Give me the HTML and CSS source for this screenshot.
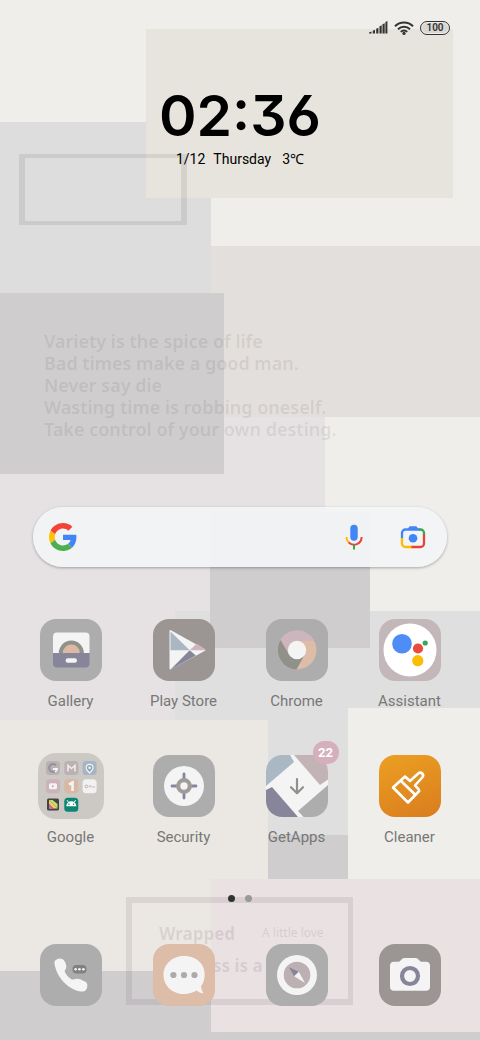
FILE: index.html
```html
<!DOCTYPE html>
<html lang="en">
<head>
    <meta charset="UTF-8">
    <meta name="viewport" content="width=device-width, initial-scale=1.0">
    <title>Home Screen</title>
    <link rel="stylesheet" href="styles.css">
</head>
<body>
    <!-- Wallpaper -->
    <svg class="wallpaper" viewBox="0 0 480 1040" preserveAspectRatio="xMidYMid slice" aria-hidden="true">
        <rect width="480" height="1040" fill="#efeeea"/>
        <rect y="122" width="211" height="171" fill="#dddddd"/>
        <rect x="146" y="29" width="307" height="169" fill="#e6e4dd"/>
        <path d="M19 154h168v71H19zM25 158v63h156v-63z" fill="#000" fill-opacity=".08" fill-rule="evenodd"/>
        <rect x="211" y="246" width="269" height="171" fill="#e3dfdc"/>
        <rect y="417" width="325" height="303" fill="#e6e2e3"/>
        <rect y="293" width="224" height="181" fill="#cfcdce"/>
        <rect x="175" y="611" width="305" height="109" fill="#dfdfdf"/>
        <rect x="210" y="512" width="160" height="136" fill="#cfcdce"/>
        <rect y="720" width="268" height="252" fill="#ebe8e3"/>
        <rect x="268" y="708" width="80" height="127" fill="#dfdfdf"/>
        <rect x="348" y="708" width="132" height="171" fill="#efeeea"/>
        <rect x="268" y="835" width="80" height="44" fill="#cfcdce"/>
        <rect y="971" width="480" height="69" fill="#cfcdce"/>
        <rect x="211" y="879" width="269" height="153" fill="#eae1e2"/>
        <path d="M126 897h227v108H126zM132 903v96h216v-96z" fill="#503c50" fill-opacity=".11" fill-rule="evenodd"/>
        <text class="wall-title" x="159" y="940">Wrapped</text>
        <text class="wall-small" x="262" y="937">A little love</text>
        <text class="wall-title" x="213" y="972">ss is a</text>
    </svg>

    <header class="status-bar">
        <svg width="19" height="13" viewBox="0 0 19 13" role="img" aria-label="Signal">
            <path d="M0 12.5h2.500V10.600L0 11.600zM3.800 12.500h2.200V8.800l-2.200 1zM7.200 12.500h2.200V6.700l-2.200 1zM10.500 12.500h2.200V4.300l-2.200 1zM13.500 12.500h2.200V2.200l-2.200 1zM16.400 12.500h2V0l-2 1z" fill="#333"/>
        </svg>
        <svg width="20" height="14" viewBox="0 0 20 14" role="img" aria-label="Wi-Fi">
            <g fill="none" stroke="#333" stroke-width="2">
                <path d="M1 5.300a12.800 12.800 0 0 1 18 0"/>
                <path d="M4 8.200a8.600 8.600 0 0 1 12 0"/>
                <path d="M6.800 10.900a4.600 4.600 0 0 1 6.400 0"/>
            </g>
            <circle cx="10" cy="12.400" r="1.600" fill="#333"/>
        </svg>
        <span class="battery">100</span>
    </header>

    <main>
        <section class="clock">
            <h1 class="time">02:36</h1>
            <p class="date"><span>1/12</span><span>Thursday</span><span class="temp">3℃</span></p>
        </section>

        <blockquote class="quote">
            Variety is the spice of life<br>
            Bad times make a good man.<br>
            Never say die<br>
            Wasting time is robbing oneself.<br>
            Take control of your own desting.
        </blockquote>

        <form class="search">
            <svg width="28" height="28" viewBox="0 0 48 48" aria-hidden="true">
                <path fill="#f44336" d="M24 9.500c3.540 0 6.710 1.220 9.210 3.600l6.850-6.850C35.900 2.380 30.470 0 24 0 14.620 0 6.510 5.380 2.560 13.220l7.980 6.190C12.430 13.720 17.740 9.500 24 9.500z"/>
                <path fill="#4285f4" d="M46.980 24.550c0-1.570-.15-3.090-.38-4.550H24v9.020h12.940c-.58 2.960-2.260 5.480-4.780 7.180l7.730 6c4.510-4.180 7.090-10.360 7.090-17.650z"/>
                <path fill="#ffc107" d="M10.530 28.590A14.500 14.500 0 0 1 9.770 24c0-1.600.27-3.140.76-4.590l-7.980-6.190A23.900 23.900 0 0 0 0 24c0 3.880.92 7.540 2.560 10.780z"/>
                <path fill="#4caf50" d="M24 48c6.480 0 11.930-2.130 15.890-5.810l-7.730-6c-2.150 1.450-4.920 2.300-8.160 2.300-6.260 0-11.570-4.220-13.470-9.910l-7.980 6.190C6.510 42.620 14.620 48 24 48z"/>
            </svg>
            <input type="text" aria-label="Search">
            <button type="button" aria-label="Voice search">
                <svg width="18" height="26" viewBox="0 0 18 26">
                    <rect x="5.300" y="0.700" width="7.400" height="16" rx="3.700" fill="#4285f4"/>
                    <path d="M1.400 13a7.600 7.600 0 0 0 2.400 5.600" fill="none" stroke="#fbbc04" stroke-width="2"/>
                    <path d="M3.600 18.400A7.600 7.600 0 0 0 16.600 13" fill="none" stroke="#ea4335" stroke-width="2"/>
                    <path d="M9 20.800v4.600" stroke="#34a853" stroke-width="2"/>
                </svg>
            </button>
            <button type="button" aria-label="Search with camera">
                <svg width="26" height="24" viewBox="0 0 26 24">
                    <g fill="none" stroke-width="2.300">
                        <path d="M2 13.500V8a3.500 3.500 0 0 1 3.500-3.500H20" stroke="#4285f4"/>
                        <path d="M19 4.500h1.500A3.500 3.500 0 0 1 24 8v2" stroke="#34a853"/>
                        <path d="M24 9.500v9a3.500 3.500 0 0 1-3.500 3.500H11" stroke="#ea4335"/>
                        <path d="M11.500 22h-6A3.500 3.500 0 0 1 2 18.500V13" stroke="#fbbc04"/>
                    </g>
                    <path d="M7.500 4.500l1.300-2.300q.5-.9 1.600-.9h5.200q1.100 0 1.600.9l1.300 2.300z" fill="#4285f4"/>
                    <circle cx="13" cy="13.300" r="4.300" fill="#4285f4"/>
                </svg>
            </button>
        </form>

        <nav class="apps" aria-label="Apps">
            <a class="app" href="#">
                <span class="icon gray">
                    <svg viewBox="0 0 62 62">
                        <path d="M13 34V17.500a4 4 0 0 1 4-4h28.500a4 4 0 0 1 4 4V34z" fill="#f4f4f4"/>
                        <path d="M18.800 34a12.500 12.500 0 0 1 25 0z" fill="#90918a"/>
                        <path d="M22.800 34a8.500 8.500 0 0 1 17 0z" fill="#ddb9a4"/>
                        <path d="M13 34h36.500v10.500a4 4 0 0 1-4 4H17a4 4 0 0 1-4-4z" fill="#87859a"/>
                        <rect x="25.600" y="39.300" width="11.400" height="4.400" rx="2.200" fill="#f4f4f4"/>
                    </svg>
                </span>
                <span class="label">Gallery</span>
            </a>
            <a class="app" href="#">
                <span class="icon taupe">
                    <svg viewBox="0 0 62 62">
                        <path d="M17.500 11l34.500 19.300q1 .7 0 1.500L17.500 50.500q-1 0-1-1V12q0-1 1-1z" fill="#f4f4f4"/>
                        <path d="M17.500 12.500v18.700h19.200z" fill="#a9b7c2"/>
                        <path d="M36.700 31.200l7-6.700 8 5.600q.8.500.6 1.100z" fill="#cfb3bd"/>
                        <path d="M36.700 31.200L17.500 50.500l25.300-14z" fill="#87859a"/>
                    </svg>
                </span>
                <span class="label">Play Store</span>
            </a>
            <a class="app" href="#">
                <span class="icon gray">
                    <svg viewBox="0 0 62 62">
                        <circle cx="31" cy="31" r="19.500" fill="#ddbca8"/>
                        <path d="M14.500 21A19.500 19.500 0 0 1 48.300 22H31a9 9 0 0 0-8.800 11z" fill="#cdb5be"/>
                        <path d="M14.500 21A19.500 19.500 0 0 0 30.500 50.500L38 37 22.800 35z" fill="#90918a"/>
                        <circle cx="31" cy="31" r="9.200" fill="#f4f4f4"/>
                    </svg>
                </span>
                <span class="label">Chrome</span>
            </a>
            <a class="app" href="#">
                <span class="icon mauve">
                    <svg viewBox="0 0 62 62">
                        <circle cx="31" cy="31" r="26.500" fill="#fff"/>
                        <circle cx="23" cy="24.700" r="9.800" fill="#4e8df5"/>
                        <circle cx="39" cy="29.500" r="5.100" fill="#ea4b3d"/>
                        <circle cx="46.200" cy="24" r="2.600" fill="#34a853"/>
                        <circle cx="38.800" cy="41.700" r="5.600" fill="#fbbc04"/>
                    </svg>
                </span>
                <span class="label">Assistant</span>
            </a>
            <a class="app" href="#">
                <span class="icon folder">
                    <svg viewBox="0 0 66 66">
                        <rect x="8" y="8" width="14" height="14" rx="3.500" fill="#bcb1b2"/>
                        <path d="M18 12.200a4 4 0 1 0 1 3.800h-4" fill="none" stroke="#8e929e" stroke-width="2"/>
                        <path d="M15 16h4a4 4 0 0 1-2 3" fill="none" stroke="#f4f4f4" stroke-width="2"/>
                        <rect x="26.300" y="8" width="14" height="14" rx="3.500" fill="#bcb1b2"/>
                        <path d="M30 18.500v-6l3.500 3 3.500-3v6" fill="none" stroke="#eee" stroke-width="1.600"/>
                        <rect x="44.600" y="8" width="14" height="14" rx="3.500" fill="#a5b5c4"/>
                        <path d="M51.600 20c-2-2-3.400-3.500-3.400-5.300a3.400 3.400 0 0 1 6.800 0c0 1.800-1.400 3.300-3.400 5.300z" fill="#8fa3b5" stroke="#f4f4f4" stroke-width="1.200"/>
                        <circle cx="51.600" cy="14.700" r="1.300" fill="#f4f4f4"/>
                        <rect x="8" y="26.300" width="14" height="14" rx="3.500" fill="#cbb2bb"/>
                        <rect x="11" y="30.300" width="8" height="6" rx="1.500" fill="#f4f4f4"/>
                        <path d="M14.200 32v2.600l2-1.300z" fill="#b99ca8"/>
                        <rect x="26.300" y="26.300" width="14" height="14" rx="3.500" fill="#d8b7a3"/>
                        <path d="M31 31.500l3.500-2v8.500" fill="none" stroke="#f4f4f4" stroke-width="2.600"/>
                        <rect x="44.600" y="26.300" width="14" height="14" rx="3.500" fill="#f2f1f1"/>
                        <circle cx="48.300" cy="33.400" r="1.400" fill="none" stroke="#aaa" stroke-width=".8"/>
                        <text class="tiny" x="50.800" y="35">Pro</text>
                        <rect x="9" y="45.500" width="12" height="12" rx="1.500" fill="#444"/>
                        <path d="M11 47v8.500h8.500z" fill="#f5d34a"/>
                        <path d="M11 47l8.500 8.500V51l-5-4z" fill="#bde07a"/>
                        <path d="M11 50.500l5 5h-5z" fill="#e255a8"/>
                        <path d="M11 53.500l2 2h-2z" fill="#42b8dc"/>
                        <rect x="26.300" y="44.700" width="14" height="14" rx="3.500" fill="#0b8672"/>
                        <path d="M28.300 53.200a5 5 0 0 1 10 0z" fill="#fff"/>
                        <path d="M29 47.200l1.600 2.300M37.600 47.200L36 49.500" stroke="#fff"/>
                        <circle cx="31" cy="51.300" r=".7" fill="#0b8672"/>
                        <circle cx="35.600" cy="51.300" r=".7" fill="#0b8672"/>
                    </svg>
                </span>
                <span class="label">Google</span>
            </a>
            <a class="app" href="#">
                <span class="icon gray">
                    <svg viewBox="0 0 62 62">
                        <circle cx="31" cy="31" r="20" fill="#f4f4f4"/>
                        <path d="M31 19v24M19 31h24" stroke="#87859a" stroke-width="2.800" stroke-linecap="round"/>
                        <circle cx="31" cy="31" r="5.800" fill="#f4f4f4" stroke="#a09c9a" stroke-width="4.200"/>
                    </svg>
                </span>
                <span class="label">Security</span>
            </a>
            <a class="app" href="#">
                <span class="icon white">
                    <svg viewBox="0 0 62 62">
                        <path d="M0 0h24l4 7L0 31z" fill="#aab8c4"/>
                        <path d="M28 0h34v24.500L54 30z" fill="#c2b3b6"/>
                        <path d="M62 30v32H37.500L32 56z" fill="#adadad"/>
                        <path d="M0 35l6-3 26 30H0z" fill="#87859a"/>
                        <path d="M31 24v14M25 32.200l6 6 6-6" fill="none" stroke="#90918a" stroke-width="2.200" stroke-linecap="round" stroke-linejoin="round"/>
                    </svg>
                    <span class="badge">22</span>
                </span>
                <span class="label">GetApps</span>
            </a>
            <a class="app" href="#">
                <span class="icon orange">
                    <svg viewBox="0 0 62 62">
                        <g fill="none" stroke="#fff" stroke-width="2.600" stroke-linejoin="round">
                            <path d="M14 32.500L26 21.500l5 4.500 8.200-7.500c3-2.500 6.500 1.200 4 4L36 30.500c1.800 2 4.500 3.200 4.200 5.500L29 47.500z"/>
                            <path d="M21.500 25.500L36.500 40"/>
                        </g>
                    </svg>
                </span>
                <span class="label">Cleaner</span>
            </a>
        </nav>
    </main>

    <div class="pages">
        <span class="dot active"></span>
        <span class="dot"></span>
    </div>

    <footer class="dock">
        <a class="icon gray" href="#" aria-label="Phone">
            <svg viewBox="0 0 62 62">
                <path d="M17 15.200c2.600-1.300 5.800-.5 7.200 1.600 1.700 2.500 2.400 5 2 6.900-.4 1.700-2 2.700-1.400 4.100 1.200 3 3.300 5.200 6.200 7.200 1.500 1 2.700.4 4.200-.1 2.600-.9 6.100.5 10.200 2.900 2.300 1.400 2.400 4.500 1.300 7-1.200 2.500-3.500 3.100-6.300 2.700-12.600-2.500-24-14.500-26-28.300-.3-1.800.8-3.100 2.600-4z" fill="#f4f4f4"/>
                <rect x="32.500" y="21" width="14" height="8.400" rx="4" fill="#808080"/>
                <g fill="#f4f4f4">
                    <circle cx="35.600" cy="25.200" r="1.300"/>
                    <circle cx="39.500" cy="25.200" r="1.300"/>
                    <circle cx="43.400" cy="25.200" r="1.300"/>
                </g>
            </svg>
        </a>
        <a class="icon peach" href="#" aria-label="Messages">
            <svg viewBox="0 0 62 62">
                <path d="M31 12c11.500 0 20.700 7 20.700 18.500 0 5-1.500 9-3.700 12 .3 3 1.200 4.800 2.700 7-2.800-.3-5.300-1.500-7.300-3C40 48.800 36 50 31 50 19.500 50 10.500 42 10.500 31S19.500 12 31 12z" fill="#f4f4f4"/>
                <g fill="#ababab">
                    <circle cx="20.400" cy="31" r="3.100"/>
                    <circle cx="31" cy="31" r="3.100"/>
                    <circle cx="41.500" cy="31" r="3.100"/>
                </g>
            </svg>
        </a>
        <a class="icon gray" href="#" aria-label="Browser">
            <svg viewBox="0 0 62 62">
                <circle cx="31" cy="31" r="20" fill="#f4f4f4"/>
                <circle cx="31" cy="31" r="13.300" fill="#bdb0b2"/>
                <path d="M23 23.300l9.800 4.500-4.600 4.500z" fill="#87859a"/>
                <path d="M39 39l-6.200-11.200-4.600 4.500z" fill="#f4f4f4"/>
            </svg>
        </a>
        <a class="icon taupe" href="#" aria-label="Camera">
            <svg viewBox="0 0 62 62">
                <path d="M15 17.700h4.500q1.500 0 2.500-1.700t3-2h12q2 .3 3 2t2.500 1.700H47a4 4 0 0 1 4 4v21a4 4 0 0 1-4 4H15a4 4 0 0 1-4-4v-21a4 4 0 0 1 4-4z" fill="#f4f4f4"/>
                <circle cx="31" cy="32" r="8" fill="none" stroke="#87859a" stroke-width="4.200"/>
            </svg>
        </a>
    </footer>
</body>
</html>
```

FILE: styles.css
```css
* {
    box-sizing: border-box;
}
body {
    margin: 0;
    min-height: 100vh;
    display: flex;
    flex-direction: column;
    position: relative;
    font-family: Roboto, "Liberation Sans", sans-serif;
    color: #000;
}
.wallpaper {
    position: absolute;
    inset: 0;
    width: 100%;
    height: 100%;
    z-index: -1;
}
.wall-title {
    font: 700 17px "Noto Sans", sans-serif;
    fill: #503c50;
    fill-opacity: 0.12;
}
.wall-small {
    font: 12px "Noto Sans", sans-serif;
    fill: #503c50;
    fill-opacity: 0.14;
}
.status-bar {
    display: flex;
    justify-content: flex-end;
    align-items: center;
    gap: 6px;
    padding: 19px 30px 0;
    height: 36px;
}
.battery {
    width: 30px;
    height: 14px;
    border: 1px solid #333;
    border-radius: 7px;
    background: #d8d7d3;
    box-shadow: inset 0 0 0 1px #efeeea;
    color: #333;
    font-size: 10px;
    font-weight: 600;
    line-height: 12px;
    text-align: center;
}
.clock {
    padding-top: 50px;
    text-align: center;
}
.time {
    margin: 0;
    font-family: Inter, sans-serif;
    font-feature-settings: "cv09", "ss01";
    font-size: 57px;
    font-weight: 600;
    line-height: 60px;
}
.date {
    display: flex;
    justify-content: center;
    gap: 8px;
    margin: 3px 0 0;
    font-size: 14px;
    line-height: 20px;
}
.temp {
    margin-left: 3px;
}
.quote {
    margin: 161px 0 0 44px;
    font-family: "Noto Sans", sans-serif;
    font-size: 18px;
    font-weight: 600;
    line-height: 22px;
    color: rgba(60, 50, 50, 0.11);
}
.search {
    display: flex;
    align-items: center;
    height: 60px;
    margin: 67px 33px 0;
    padding: 0 21px 0 16px;
    border-radius: 30px;
    background: rgba(241, 244, 246, 0.96);
    box-shadow: 0 1px 3px rgba(0, 0, 0, 0.3);
}
.search input {
    flex: 1;
    min-width: 0;
    height: 40px;
    border: none;
    outline: none;
    background: none;
    font-size: 16px;
}
.search button {
    display: flex;
    padding: 0;
    border: none;
    background: none;
    cursor: pointer;
}
.search button + button {
    margin-left: 37px;
}
.apps {
    display: grid;
    grid-template-columns: repeat(4, 1fr);
    row-gap: 44px;
    margin-top: 52px;
    padding: 0 14px;
}
.app {
    display: flex;
    flex-direction: column;
    align-items: center;
    gap: 10px;
    color: #777;
    text-decoration: none;
}
.icon {
    position: relative;
    display: block;
    width: 62px;
    height: 62px;
    border-radius: 16px;
}
.icon svg {
    display: block;
    width: 100%;
    height: 100%;
    border-radius: inherit;
}
.gray {
    background: #adadad;
}
.taupe {
    background: #9b9693;
}
.mauve {
    background: #c4b7ba;
}
.peach {
    background: #ddbca8;
}
.white {
    background: #f4f4f4;
}
.orange {
    background: linear-gradient(160deg, #eca022, #d97c1e);
}
.folder {
    width: 66px;
    height: 66px;
    margin: -2px;
    border-radius: 18px;
    background: #ccc8c4;
}
.tiny {
    font-size: 4px;
    fill: #c9a5b0;
}
.label {
    font-size: 15px;
    line-height: 20px;
}
.badge {
    position: absolute;
    top: -14px;
    right: -11px;
    width: 26px;
    height: 23px;
    border-radius: 12px;
    background: #d5afbb;
    color: #fff;
    font-size: 13px;
    font-weight: 700;
    line-height: 23px;
    text-align: center;
}
.pages {
    display: flex;
    justify-content: center;
    gap: 10px;
    margin-top: auto;
}
.dot {
    width: 7px;
    height: 7px;
    border-radius: 50%;
    background: #999;
}
.dot.active {
    background: #333;
}
.dock {
    display: grid;
    grid-template-columns: repeat(4, 1fr);
    justify-items: center;
    padding: 42px 14px 34px;
}
```
